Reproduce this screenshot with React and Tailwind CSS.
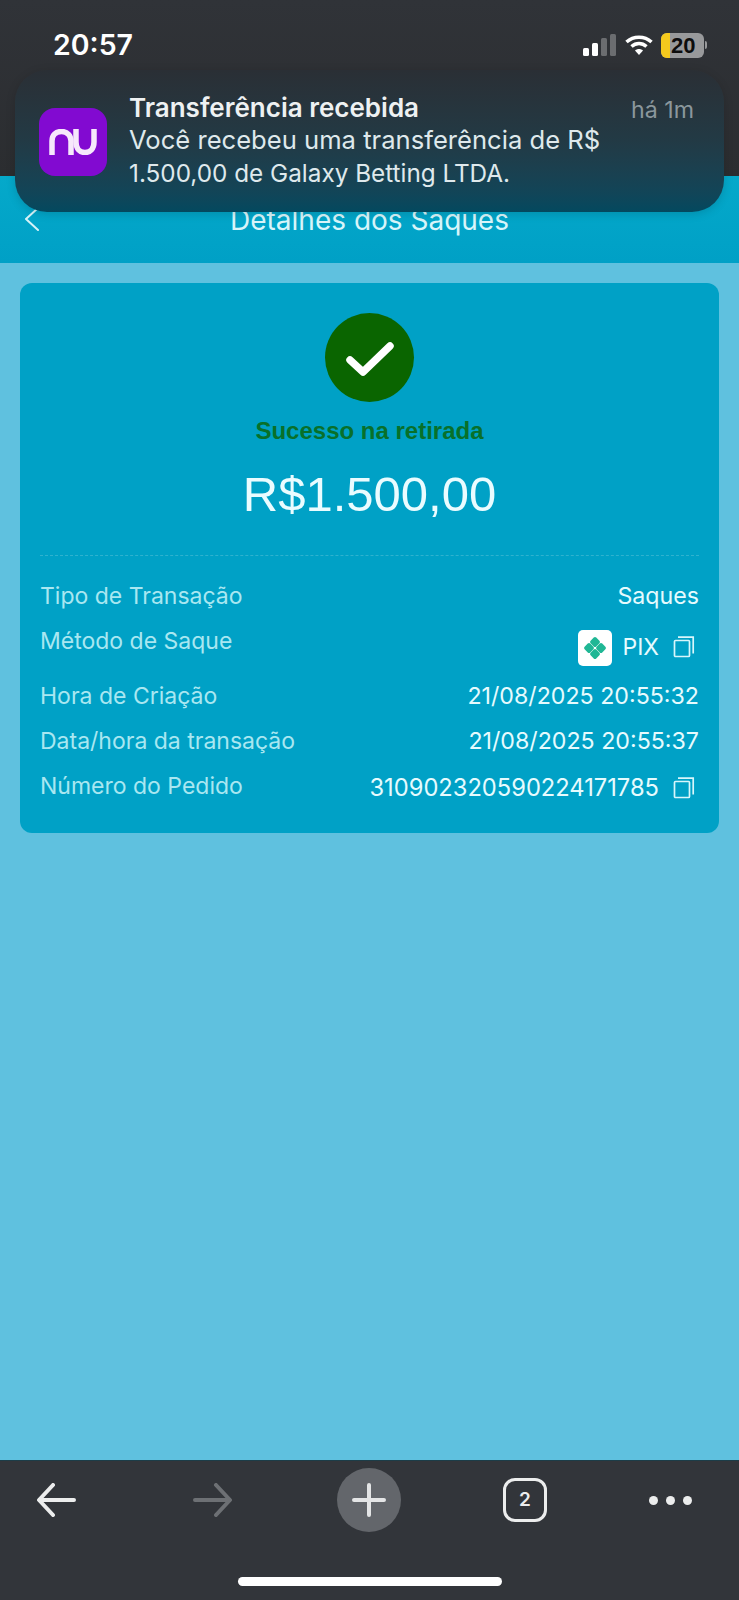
const CopyIcon = () => (
  <svg width="22" height="22" viewBox="0 0 22 22" fill="none" stroke="#d8f6fb" strokeWidth="1.7" className="ml-[14px] mr-[4px] shrink-0">
    <rect x="1.5" y="4.5" width="15" height="16" rx="1" />
    <path d="M5 1.2h15.2v16.3" />
  </svg>
);

const PixIcon = () => (
  <div className="mt-[2px] w-[34px] h-[36px] bg-white rounded-[5px] flex items-center justify-center">
    <svg width="24" height="24" viewBox="0 0 24 24" fill="#20b795">
      <rect x="8" y="2" width="8" height="8" rx="1.800" transform="rotate(45 12 6)" />
      <rect x="8" y="14" width="8" height="8" rx="1.800" transform="rotate(45 12 18)" />
      <rect x="2" y="8" width="8" height="8" rx="1.800" transform="rotate(45 6 12)" />
      <rect x="14" y="8" width="8" height="8" rx="1.800" transform="rotate(45 18 12)" />
    </svg>
  </div>
);

const Row = ({ label, value, tall, children }) => (
  <div className={`flex justify-between items-start ${tall ? "h-[40px]" : "h-[30px]"}`}>
    <span className="text-[23px] leading-[30px] text-[#a9e7f1]">{label}</span>
    {children || <span className="text-[23.2px] leading-[30px] text-[#e6fbfe]">{value}</span>}
  </div>
);

export default function App() {
  return (
    <div className="relative w-[739px] h-[1600px] flex flex-col overflow-hidden bg-[#5fc1df] font-['Inter',sans-serif]">
      <div className="h-[176px] shrink-0 bg-gradient-to-b from-[#303338] to-[#2b2d30]">
        <div className="flex items-center justify-between pl-[53px] pr-[32px] pt-[29px] h-[61px]">
          <span className="text-[28.5px] leading-[32px] font-semibold text-white">20:57</span>
          <div className="flex items-center">
            <svg width="33" height="22" viewBox="0 0 33 22">
              <rect x="0" y="14" width="6" height="8" rx="1.500" fill="#fff" />
              <rect x="9" y="9" width="6" height="13" rx="1.500" fill="#fff" />
              <rect x="18" y="4" width="6" height="18" rx="1.500" fill="#6b6d70" />
              <rect x="27" y="0" width="6" height="22" rx="1.500" fill="#6b6d70" />
            </svg>
            <svg width="28" height="20" viewBox="0 0 28 20" fill="none" stroke="#fff" strokeWidth="3.500" className="ml-[9px]">
              <path d="M1.500 7C8.500 .5 19.500 .5 26.500 7" />
              <path d="M6.500 11.500c4.500-4 10.500-4 15 0" />
              <path d="M14 20l-4-4.500c2.300-2 5.700-2 8 0z" fill="#fff" stroke="none" />
            </svg>
            <div className="ml-[8px] w-[43px] h-[25px] rounded-[6px] bg-[#98999b] overflow-hidden flex items-center">
              <div className="w-[9px] h-full bg-[#f4c91d] shrink-0" />
              <span className="ml-[1px] text-[22px] leading-[25px] font-bold text-[#0d0d0d] font-['Liberation_Sans',sans-serif]">20</span>
            </div>
            <div className="ml-[1px] w-[2px] h-[8px] rounded-r-[2px] bg-[#98999b]" />
          </div>
        </div>
      </div>

      <div className="h-[87px] shrink-0 bg-gradient-to-b from-[#05a9ca] to-[#00a0c6] relative flex items-center justify-center pt-[1px]">
        <svg width="15" height="24" viewBox="0 0 15 24" fill="none" stroke="#d6f3f8" strokeWidth="2" strokeLinecap="round" strokeLinejoin="round" className="absolute left-[24px] top-[31px]">
          <path d="M14 1L2 12l12 11" />
        </svg>
        <span className="text-[28px] leading-[32px] text-[#d8f5fa]">Detalhes dos Saques</span>
      </div>

      <div className="flex-1 px-[20px] pt-[20px]">
        <div className="rounded-[12px] bg-[#00a1c6] px-[20px] pt-[30px] pb-[32px]">
          <div className="flex flex-col items-center">
            <div className="w-[89px] h-[89px] rounded-full bg-[#0a6500] flex items-center justify-center">
              <svg width="50" height="38" viewBox="0 0 50 38" fill="none" stroke="#fff" strokeWidth="7.500" strokeLinecap="round" strokeLinejoin="round" className="mt-[4px]">
                <path d="M5 19l13 12L45 5" />
              </svg>
            </div>
            <div className="mt-[14px] text-[24px] leading-[30px] font-bold text-[#08702a] font-['Liberation_Sans',sans-serif]">
              Sucesso na retirada
            </div>
            <div className="mt-[20px] text-[49px] leading-[56px] text-[#eafcff] font-['Liberation_Sans',sans-serif]">
              R$1.500,00
            </div>
          </div>
          <div className="mt-[33px] mb-[25px] border-t border-dashed border-[#2fb2cf]" />
          <div className="flex flex-col gap-[15px]">
            <Row label="Tipo de Transação" value="Saques" />
            <Row label="Método de Saque" tall>
              <div className="flex items-center h-[40px] mt-[1px]">
                <PixIcon />
                <span className="ml-[10px] text-[23px] leading-[30px] text-[#e6fbfe]">PIX</span>
                <CopyIcon />
              </div>
            </Row>
            <Row label="Hora de Criação" value="21/08/2025 20:55:32" />
            <Row label="Data/hora da transação" value="21/08/2025 20:55:37" />
            <Row label="Número do Pedido">
              <div className="flex items-center h-[30px] mt-[2px]">
                <span className="text-[23.7px] leading-[30px] text-[#e6fbfe]">310902320590224171785</span>
                <CopyIcon />
              </div>
            </Row>
          </div>
        </div>
      </div>

      <div className="h-[140px] shrink-0 bg-[#32353a] border-t border-[#1c3d48] flex flex-col items-center">
        <div className="w-full h-[78px] flex items-center pl-[37px]">
          <svg width="39" height="34" viewBox="0 0 39 34" fill="none" stroke="#eceded" strokeWidth="4" strokeLinecap="round" strokeLinejoin="round">
            <path d="M37 17H3M16 2L2 17l14 15" />
          </svg>
          <svg width="39" height="34" viewBox="0 0 39 34" fill="none" stroke="#6d7074" strokeWidth="4" strokeLinecap="round" strokeLinejoin="round" className="ml-[117px]">
            <path d="M2 17h34M23 2l14 15-14 15" />
          </svg>
          <div className="ml-[105px] w-[64px] h-[64px] rounded-full bg-[#63666b] flex items-center justify-center">
            <svg width="34" height="34" viewBox="0 0 34 34" fill="none" stroke="#e4e5e6" strokeWidth="4" strokeLinecap="round">
              <path d="M17 2v30M2 17h30" />
            </svg>
          </div>
          <div className="ml-[102px] w-[44px] h-[44px] rounded-[12px] border-[3.5px] border-[#eceded] flex items-center justify-center">
            <span className="text-[19px] leading-[24px] font-semibold text-[#eceded]">2</span>
          </div>
          <div className="ml-[102px] flex gap-[8px]">
            <div className="w-[9px] h-[9px] rounded-full bg-[#eceded]" />
            <div className="w-[9px] h-[9px] rounded-full bg-[#eceded]" />
            <div className="w-[9px] h-[9px] rounded-full bg-[#eceded]" />
          </div>
        </div>
        <div className="mt-[38px] w-[264px] h-[9px] rounded-full bg-white" />
      </div>

      <div className="absolute left-[15px] top-[70px] w-[709px] h-[142px] rounded-[32px] bg-gradient-to-b from-[#2a2f35] via-[#223a45] to-[#03495f] shadow-[0_2px_10px_rgba(0,0,0,0.15)] flex">
        <div className="ml-[24px] mt-[38px] w-[68px] h-[68px] rounded-[16px] bg-[#820ad1] flex items-center justify-center shrink-0">
          <svg width="48" height="26" viewBox="0 0 48 26" fill="none" stroke="#f6e8fb" strokeWidth="5.500">
            <path d="M3 26V12C3 6 7 2.500 12.500 2.500C18.500 2.500 22 7 22 12V26" />
            <path d="M27 0V13C27 20 31 23.500 36 23.500C41 23.500 45 20 45 13V0" />
          </svg>
        </div>
        <div className="ml-[22px] pt-[22px] w-[490px] shrink-0">
          <div className="text-[26px] leading-[32px] font-semibold text-[#eef1f2]">Transferência recebida</div>
          <div className="text-[25.6px] leading-[32.5px] text-[#dfe9ec]">Você recebeu uma transferência de R$</div>
          <div className="text-[24.3px] leading-[32.5px] text-[#dfe9ec]">1.500,00 de Galaxy Betting LTDA.</div>
        </div>
        <div className="absolute right-[30px] top-[24px] text-[23.2px] leading-[32px] text-[#8b979c]">há 1m</div>
      </div>
    </div>
  );
}
